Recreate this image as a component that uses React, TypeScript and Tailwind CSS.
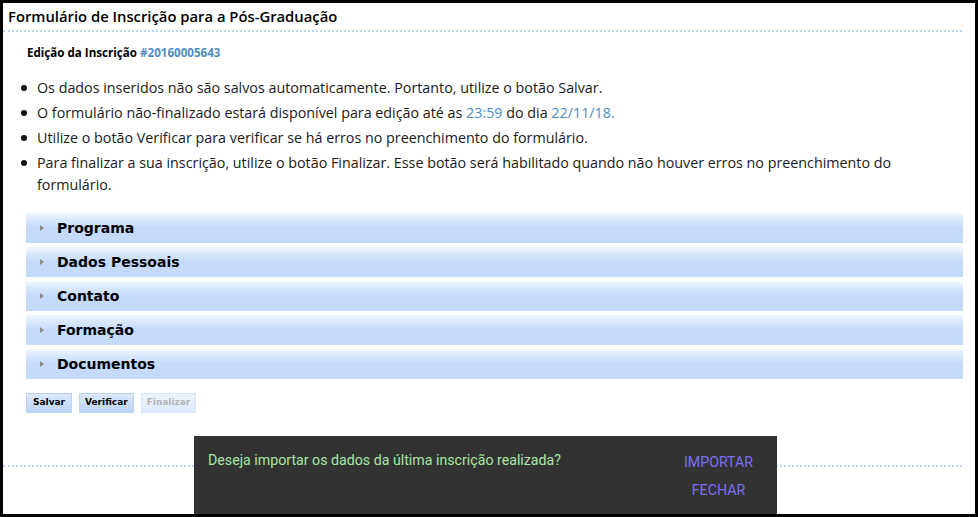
import React from "react";

const sections = ["Programa", "Dados Pessoais", "Contato", "Formação", "Documentos"];

function Bullet({ children }: { children: React.ReactNode }) {
  return (
    <li className="flex">
      <span className="mt-[8px] h-[6px] w-[6px] shrink-0 rounded-full bg-[#111]" />
      <span className="ml-[10px]">{children}</span>
    </li>
  );
}

function SectionRow({ title }: { title: string }) {
  return (
    <div className="flex h-[30px] items-center bg-[linear-gradient(to_bottom,#f3f8ff_0%,#d6e6fd_25%,#c6dbfb_50%,#c4dafb_100%)]">
      <span className="ml-[14px] h-0 w-0 border-y-[3.5px] border-l-[4px] border-y-transparent border-l-[#8a8a8a]" />
      <span className="ml-[13px] font-['DejaVu_Sans',Verdana,sans-serif] text-[14px] font-bold text-black">
        {title}
      </span>
    </div>
  );
}

function ActionButton({ label, disabled, wide }: { label: string; disabled?: boolean; wide?: boolean }) {
  const pad = wide ? "px-[6px]" : "px-[5px]";
  return (
    <button
      disabled={disabled}
      className={
        disabled
          ? `h-[20px] border border-[#dbe7f8] bg-[linear-gradient(to_bottom,#edf4fd,#dde9fb)] ${pad} font-['DejaVu_Sans',Verdana,sans-serif] text-[9px] font-bold text-[#b4b4b4]`
          : `h-[20px] border border-[#bdd3f2] bg-[linear-gradient(to_bottom,#dde9fb,#bcd4f6)] ${pad} font-['DejaVu_Sans',Verdana,sans-serif] text-[9px] font-bold text-black`
      }
    >
      {label}
    </button>
  );
}

export default function App() {
  return (
    <div className="relative h-[517px] w-[978px] overflow-hidden border-[3px] border-black bg-white font-['Open_Sans',sans-serif] text-[#1a1a1a]">
      <div className="mr-[13px] border-b-2 border-dotted border-[#bdd4f2] pb-[4px] pl-[5px] pt-[3px] text-[14.8px] font-semibold leading-[20px] text-black">
        Formulário de Inscrição para a Pós-Graduação
      </div>

      <div className="mt-[13px] pl-[24px] text-[11.6px] font-bold leading-[16px] text-black">
        Edição da Inscrição <span className="text-[#4f8cc0]">#20160005643</span>
      </div>

      <ul className="mr-[12px] mt-[16px] space-y-[3px] pl-[18px] text-[14.3px] leading-[22px]">
        <Bullet>Os dados inseridos não são salvos automaticamente. Portanto, utilize o botão Salvar.</Bullet>
        <Bullet>
          O formulário não-finalizado estará disponível para edição até as{" "}
          <span className="text-[#4f8cc0]">23:59</span> do dia <span className="text-[#4f8cc0]">22/11/18.</span>
        </Bullet>
        <Bullet>Utilize o botão Verificar para verificar se há erros no preenchimento do formulário.</Bullet>
        <Bullet>
          Para finalizar a sua inscrição, utilize o botão Finalizar. Esse botão será habilitado quando não houver erros no
          preenchimento do formulário.
        </Bullet>
      </ul>

      <div className="ml-[23px] mr-[12px] mt-[17px] flex flex-col gap-[4px]">
        {sections.map((s) => (
          <SectionRow key={s} title={s} />
        ))}
      </div>

      <div className="ml-[23px] mt-[14px] flex gap-[7px]">
        <ActionButton label="Salvar" wide />
        <ActionButton label="Verificar" />
        <ActionButton label="Finalizar" disabled />
      </div>

      <div className="mr-[13px] mt-[52px] border-b-2 border-dotted border-[#bdd4f2]" />

      <div className="absolute bottom-0 left-[191px] top-[433px] flex w-[583px] justify-between bg-[#323232] font-['Roboto',Arial,sans-serif] text-[14.2px]">
        <div className="pl-[14px] pt-[15px] leading-[18px] text-[#a8e6a3]">
          Deseja importar os dados da última inscrição realizada?
        </div>
        <div className="flex flex-col items-center pr-[24px] pt-[17px] leading-[18px] text-[#7d6ff3]">
          <span>IMPORTAR</span>
          <span className="mt-[10px]">FECHAR</span>
        </div>
      </div>
    </div>
  );
}
